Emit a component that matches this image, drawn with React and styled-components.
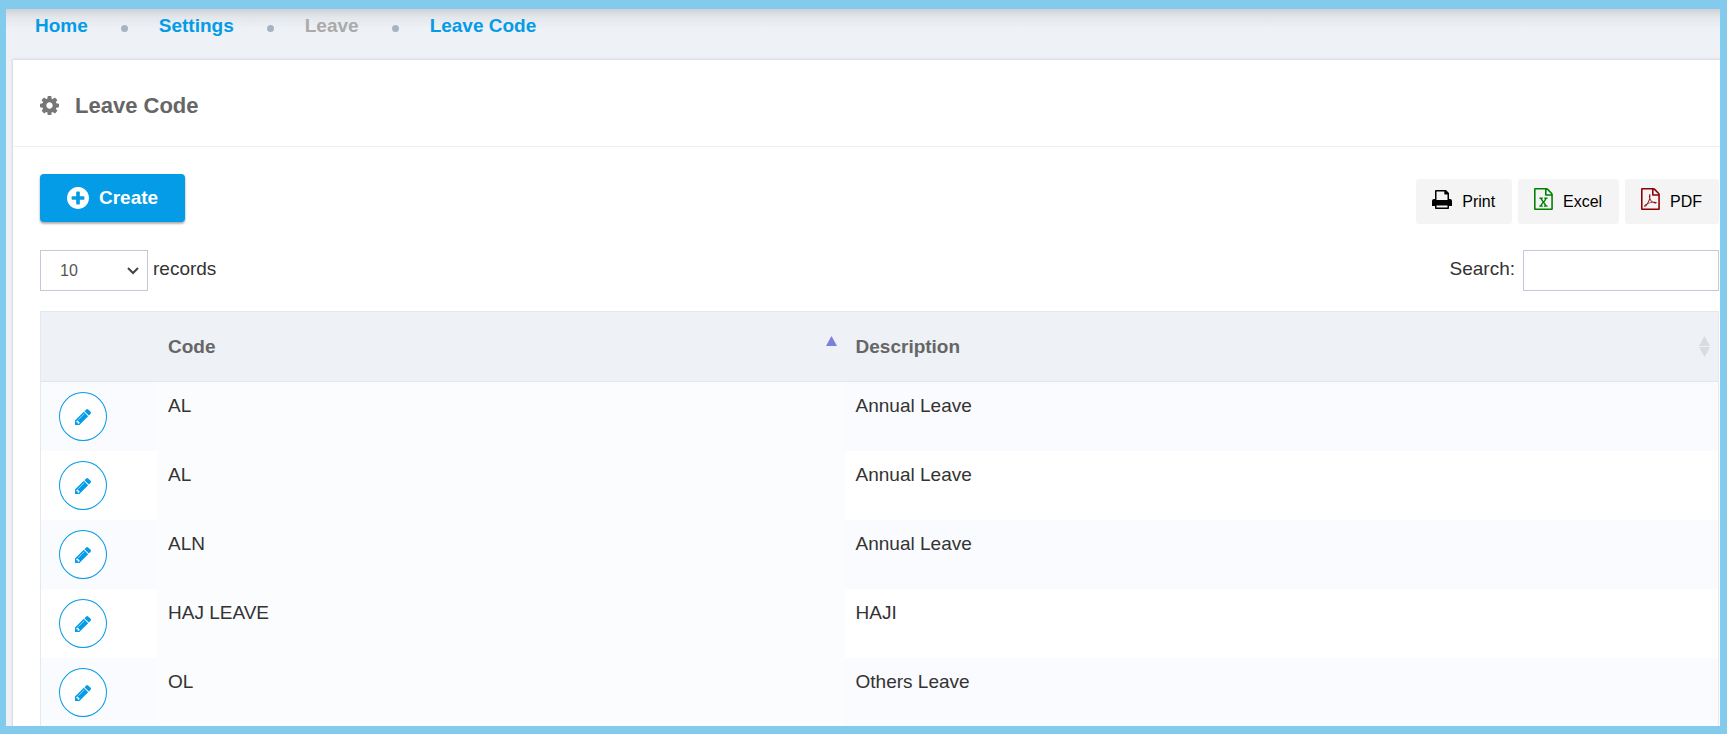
import { useState } from "react";
import styled, { createGlobalStyle } from "styled-components";

const leaveCodes = [
    { id: 1, code: "AL", description: "Annual Leave" },
    { id: 2, code: "AL", description: "Annual Leave" },
    { id: 3, code: "ALN", description: "Annual Leave" },
    { id: 4, code: "HAJ LEAVE", description: "HAJI" },
    { id: 5, code: "OL", description: "Others Leave" },
]

const filePath = "M1596 380q28 28 48 76t20 88v1152q0 40-28 68t-68 28h-1344q-40 0-68-28t-28-68v-1600q0-40 28-68t68-28h896q40 0 88 20t76 48zm-444-244v376h376q-10-29-22-41l-313-313q-12-12-41-22zm384 1528v-1024h-416q-40 0-68-28t-28-68v-416h-768v1536h1280z"

function CogIcon() {
    return (
        <CogSvg viewBox="128 128 1536 1536" aria-hidden="true">
            <path d="M1152 896q0-106-75-181t-181-75-181 75-75 181 75 181 181 75 181-75 75-181zm512-109v222q0 12-8 23t-20 13l-185 28q-19 54-39 91 35 50 107 138 10 12 10 25t-9 23q-27 37-99 108t-94 71q-12 0-26-9l-138-108q-44 23-91 38-16 136-29 186-7 28-36 28h-222q-14 0-24.5-8.5t-11.5-21.5l-28-184q-49-16-90-37l-141 107q-10 9-25 9-14 0-25-11-126-114-165-168-7-10-7-23 0-12 8-23 15-21 51-66.5t54-70.5q-27-50-41-99l-183-27q-13-2-21-12.5t-8-23.5v-222q0-12 8-23t19-13l186-28q14-46 39-92-40-57-107-138-10-12-10-24 0-10 9-23 26-36 98.5-107.5t94.5-71.5q13 0 26 10l138 107q44-23 91-38 16-136 29-186 7-28 36-28h222q14 0 24.5 8.5t11.5 21.5l28 184q49 16 90 37l142-107q9-9 24-9 13 0 25 10 129 119 165 170 7 8 7 22 0 12-8 23-15 21-51 66.5t-54 70.5q26 50 41 98l183 28q13 2 21 12.5t8 23.5z" />
        </CogSvg>
    )
}

function PlusIcon() {
    return (
        <PlusSvg viewBox="128 128 1536 1536" aria-hidden="true">
            <path d="M1344 960v-128q0-26-19-45t-45-19h-256v-256q0-26-19-45t-45-19h-128q-26 0-45 19t-19 45v256h-256q-26 0-45 19t-19 45v128q0 26 19 45t45 19h256v256q0 26 19 45t45 19h128q26 0 45-19t19-45v-256h256q26 0 45-19t19-45zm320-64q0 209-103 385.5t-279.5 279.5-385.5 103-385.5-103-279.5-279.5-103-385.5 103-385.5 279.5-279.5 385.5-103 385.5 103 279.5 279.5 103 385.5z" />
        </PlusSvg>
    )
}

function PencilIcon() {
    return (
        <PencilSvg viewBox="128 149 1515 1515" aria-hidden="true">
            <path d="M491 1536l91-91-235-235-91 91v107h128v128h107zm523-928q0-22-22-22-10 0-17 7l-542 542q-7 7-7 17 0 22 22 22 10 0 17-7l542-542q7-7 7-17zm-54-192l416 416-832 832h-416v-416zm683 96q0 53-37 90l-166 166-416-416 166-165q36-38 90-38 53 0 91 38l235 234q37 39 37 91z" />
        </PencilSvg>
    )
}

function PrintIcon() {
    return (
        <ExportSvg viewBox="0 -2 20 22" aria-hidden="true">
            <path
                fillRule="evenodd"
                d="M4 0h10l3 3v6h1a2 2 0 0 1 2 2v4.500q0 .5-.5.5H17v2.200q0 .8-.8.8H3.800q-.8 0-.8-.8V16H.5q-.5 0-.5-.5V11a2 2 0 0 1 2-2h1V1q0-1 1-1zM4.500 1.500V10h11V4.500H13q-.7 0-.7-.7V1.500zM4.500 15.500v2h11v-2z"
            />
        </ExportSvg>
    )
}

function ExcelIcon() {
    return (
        <ExportSvg viewBox="128 0 1536 1792" $color="green" aria-hidden="true">
            <path d={filePath + "m-979-234v106h281v-106h-75l103-161q5-7 10-16.5t7.5-13.5 3.5-4h2q1 4 5 10 2 4 4.5 7.5t6 8 6.5 8.5l107 161h-76v106h291v-106h-68l-192-273 195-282h67v-107h-279v107h74l-103 159q-4 7-10 16.5t-9 13.5l-2 3h-2q-1-4-5-10-6-11-17-23l-106-159h76v-107h-290v107h68l189 272-194 283h-68z"} />
        </ExportSvg>
    )
}

function PdfIcon() {
    return (
        <ExportSvg viewBox="128 0 1536 1792" $color="darkred" aria-hidden="true">
            <path d={filePath + "m-514-593q33 26 84 56 59-7 117-7 147 0 177 49 16 22 2 52 0 1-1 2l-2 2v1q-6 38-71 38-48 0-115-20t-130-53q-221 24-392 83-153 262-242 262-15 0-28-7l-24-12q-1-1-6-5-10-10-6-36 9-40 56-91.5t132-96.5q14-9 23 6 2 2 2 4 52-85 107-197 68-136 104-262-24-82-30.5-159.5t6.5-127.5q11-40 42-40h22q23 0 35 15 18 21 9 68-2 6-4 8 1 3 1 8v30q-2 123-14 192 55 164 146 238zm-576 411q52-24 137-158-51 40-87.5 84t-49.5 74zm398-920q-15 42-2 132 1-7 7-44 0-3 7-43 1-4 4-8-1-1-1-2-1-2-1-3-1-22-13-36 0 1-1 2v2zm-124 661q135-54 284-81-2-1-13-9.5t-16-13.5q-76-67-127-176-27 86-83 197-30 56-45 83zm646-16q-24-24-140-24 76 28 124 28 14 0 18-1 0-1-2-3z"} />
        </ExportSvg>
    )
}

export default function App() {

    const [search, setSearch] = useState("")
    const [size, setSize] = useState("10")

    const rows = leaveCodes.filter(({ code, description }) =>
        `${code} ${description}`.toLowerCase().includes(search.toLowerCase())
    )

    return (
        <Frame>
            <GlobalStyle />
            <Breadcrumb aria-label="Breadcrumb">
                <CrumbLink href="#home">Home</CrumbLink>
                <Dot />
                <CrumbLink href="#settings">Settings</CrumbLink>
                <Dot />
                <CrumbText>Leave</CrumbText>
                <Dot />
                <CrumbLink href="#leave-code">Leave Code</CrumbLink>
            </Breadcrumb>

            <Portlet>
                <PortletHead>
                    <CogIcon />
                    <Title>Leave Code</Title>
                </PortletHead>

                <PortletBody>
                    <Toolbar>
                        <CreateButton type="button">
                            <PlusIcon />
                            Create
                        </CreateButton>
                        <ExportButtons>
                            <ExportButton type="button"><PrintIcon />Print</ExportButton>
                            <ExportButton type="button"><ExcelIcon />Excel</ExportButton>
                            <ExportButton type="button"><PdfIcon />PDF</ExportButton>
                        </ExportButtons>
                    </Toolbar>

                    <Filters>
                        <FilterLabel>
                            <SelectBox>
                                <Select value={size} onChange={(e) => setSize(e.target.value)}>
                                    <option>10</option>
                                    <option>25</option>
                                    <option>50</option>
                                </Select>
                                <Arrow viewBox="0 0 12 8" aria-hidden="true">
                                    <path d="M1 1l5 5 5-5" />
                                </Arrow>
                            </SelectBox>
                            records
                        </FilterLabel>
                        <FilterLabel $gap="8px">
                            Search:
                            <SearchInput type="search" value={search} onChange={(e) => setSearch(e.target.value)} />
                        </FilterLabel>
                    </Filters>

                    <Table>
                        <thead>
                            <tr>
                                <HeadCell $width="116px" />
                                <HeadCell $width="41%" aria-sort="ascending">
                                    <SortButton type="button">
                                        Code
                                        <SortIcon viewBox="0 0 11 21" aria-hidden="true">
                                            <path d="M5.500 0L11 10H0z" fill="#7b80dc" />
                                        </SortIcon>
                                    </SortButton>
                                </HeadCell>
                                <HeadCell>
                                    <SortButton type="button">
                                        Description
                                        <SortIcon viewBox="0 0 11 21" aria-hidden="true">
                                            <path d="M5.500 0L11 10H0zM0 11h11L5.500 21z" fill="#d9dbde" />
                                        </SortIcon>
                                    </SortButton>
                                </HeadCell>
                            </tr>
                        </thead>
                        <tbody>
                            {rows.map((row) => (
                                <Row key={row.id}>
                                    <ActionCell>
                                        <EditButton type="button" aria-label={`Edit ${row.code}`}>
                                            <PencilIcon />
                                        </EditButton>
                                    </ActionCell>
                                    <SortedCell>{row.code}</SortedCell>
                                    <Cell>{row.description}</Cell>
                                </Row>
                            ))}
                        </tbody>
                    </Table>
                </PortletBody>
            </Portlet>
        </Frame>
    )
}


const GlobalStyle = createGlobalStyle`
    * {
        box-sizing: border-box;
    }

    body {
        margin: 0;
        font-family: "Liberation Sans", Arial, sans-serif;
        font-size: 19px;
        color: #333;
    }

    button, input, select {
        font-family: inherit;
        margin: 0;
    }
`

const Frame = styled.div`
    height: 100vh;
    overflow: hidden;
    display: flex;
    flex-direction: column;
    border-style: solid;
    border-color: #82cbec;
    border-width: 9px 7px 8px 6px;
    background: linear-gradient(#cdd0d5, #e3e6eb 8px, #eef1f6 20px);
`

/* Breadcrumb */

const Breadcrumb = styled.nav`
    display: flex;
    align-items: center;
    height: 51px;
    padding: 6px 29px 23px;
    font-weight: bold;
    line-height: 22px;
`

const CrumbLink = styled.a`
    color: #049be7;
    text-decoration: none;
`

const CrumbText = styled.span`
    color: #aaa;
`

const Dot = styled.span`
    width: 7px;
    height: 7px;
    margin: 5px 31px 0 33px;
    border-radius: 50%;
    background: #a7b3c3;
`

/* Portlet */

const Portlet = styled.section`
    flex: 1;
    margin-left: 7px;
    background: white;
    box-shadow: 0 0 2px 1px rgba(0, 0, 0, 0.1);
`

const PortletHead = styled.header`
    display: flex;
    align-items: center;
    gap: 16px;
    height: 87px;
    padding: 5px 27px 0;
    border-bottom: 1px solid #eceef1;
`

const Title = styled.h1`
    margin: 0;
    font-size: 22px;
    line-height: 26px;
    color: #666;
`

const PortletBody = styled.div`
    padding: 27px 1px 0 27px;
`

/* Toolbar */

const Toolbar = styled.div`
    display: flex;
    justify-content: space-between;
    align-items: flex-start;
    margin-bottom: 26px;
`

const CreateButton = styled.button`
    display: flex;
    align-items: center;
    gap: 10px;
    height: 48px;
    padding: 0 27px;
    border: none;
    border-radius: 4px;
    background: #049be7;
    color: white;
    font-size: 19px;
    font-weight: bold;
    box-shadow: 0 1px 3px rgba(0, 0, 0, 0.2), 0 2px 2px rgba(0, 0, 0, 0.2);
    cursor: pointer;
`

const ExportButtons = styled.div`
    display: flex;
    gap: 6px;
    padding-top: 5px;
`

const ExportButton = styled.button`
    display: flex;
    align-items: center;
    gap: 10px;
    height: 45px;
    padding: 0 17px 0 16px;
    border: none;
    border-radius: 3px;
    background: #f4f4f4;
    color: black;
    font-size: 16px;
    cursor: pointer;
`

/* Filters */

const Filters = styled.div`
    display: flex;
    justify-content: space-between;
    margin-bottom: 20px;
`

const FilterLabel = styled.label`
    display: flex;
    gap: ${({ $gap }) => $gap || "5px"};
    line-height: 38px;
`

const SelectBox = styled.span`
    position: relative;
    width: 108px;
    height: 41px;
`

const Select = styled.select`
    appearance: none;
    display: block;
    width: 100%;
    height: 100%;
    padding: 0 19px;
    border: 1px solid #c2cad8;
    border-radius: 0;
    background: white;
    color: #555;
    font-size: 16px;
`

const Arrow = styled.svg`
    position: absolute;
    right: 9px;
    top: 17px;
    width: 12px;
    height: 8px;
    fill: none;
    stroke: #444;
    stroke-width: 2;
    pointer-events: none;
`

const SearchInput = styled.input`
    width: 196px;
    height: 41px;
    padding: 0 12px;
    border: 1px solid #c2cad8;
    font-size: 16px;
    color: #555;
`

/* Table */

const Table = styled.table`
    width: 100%;
    table-layout: fixed;
    border-collapse: separate;
    border-spacing: 0;
    border: 1px solid #e5e9ef;
`

const HeadCell = styled.th`
    width: ${({ $width }) => $width || "auto"};
    height: 70px;
    padding: 0 8px 0 11px;
    border-bottom: 1px solid #e3e7ed;
    background: #eef1f6;
`

const SortButton = styled.button`
    display: flex;
    justify-content: space-between;
    align-items: center;
    width: 100%;
    padding: 0;
    border: none;
    background: none;
    color: #666;
    font-size: 19px;
    font-weight: bold;
    cursor: pointer;
`

const SortIcon = styled.svg`
    width: 11px;
    height: 21px;
`

const Cell = styled.td`
    height: 69px;
    padding: 10px 11px;
    line-height: 27px;
    vertical-align: top;
`

const SortedCell = styled(Cell)`
    background: #fbfcfd;
`

const ActionCell = styled(Cell)`
    padding: 10px 18px;
`

const Row = styled.tr`
    background: white;

    &:nth-child(odd) {
        background: #fafbfe;
    }
`

const EditButton = styled.button`
    display: flex;
    align-items: center;
    justify-content: center;
    width: 48px;
    height: 49px;
    padding: 0;
    border: 1px solid #049be7;
    border-radius: 50%;
    background: white;
    color: #049be7;
    cursor: pointer;
`

/* Icons */

const CogSvg = styled.svg`
    width: 19px;
    height: 19px;
    fill: #777;
`

const PlusSvg = styled.svg`
    width: 22px;
    height: 22px;
    fill: currentColor;
`

const PencilSvg = styled.svg`
    width: 16px;
    height: 16px;
    fill: currentColor;
`

const ExportSvg = styled.svg`
    height: 22px;
    margin-bottom: 5px;
    fill: ${({ $color }) => $color || "black"};
`
